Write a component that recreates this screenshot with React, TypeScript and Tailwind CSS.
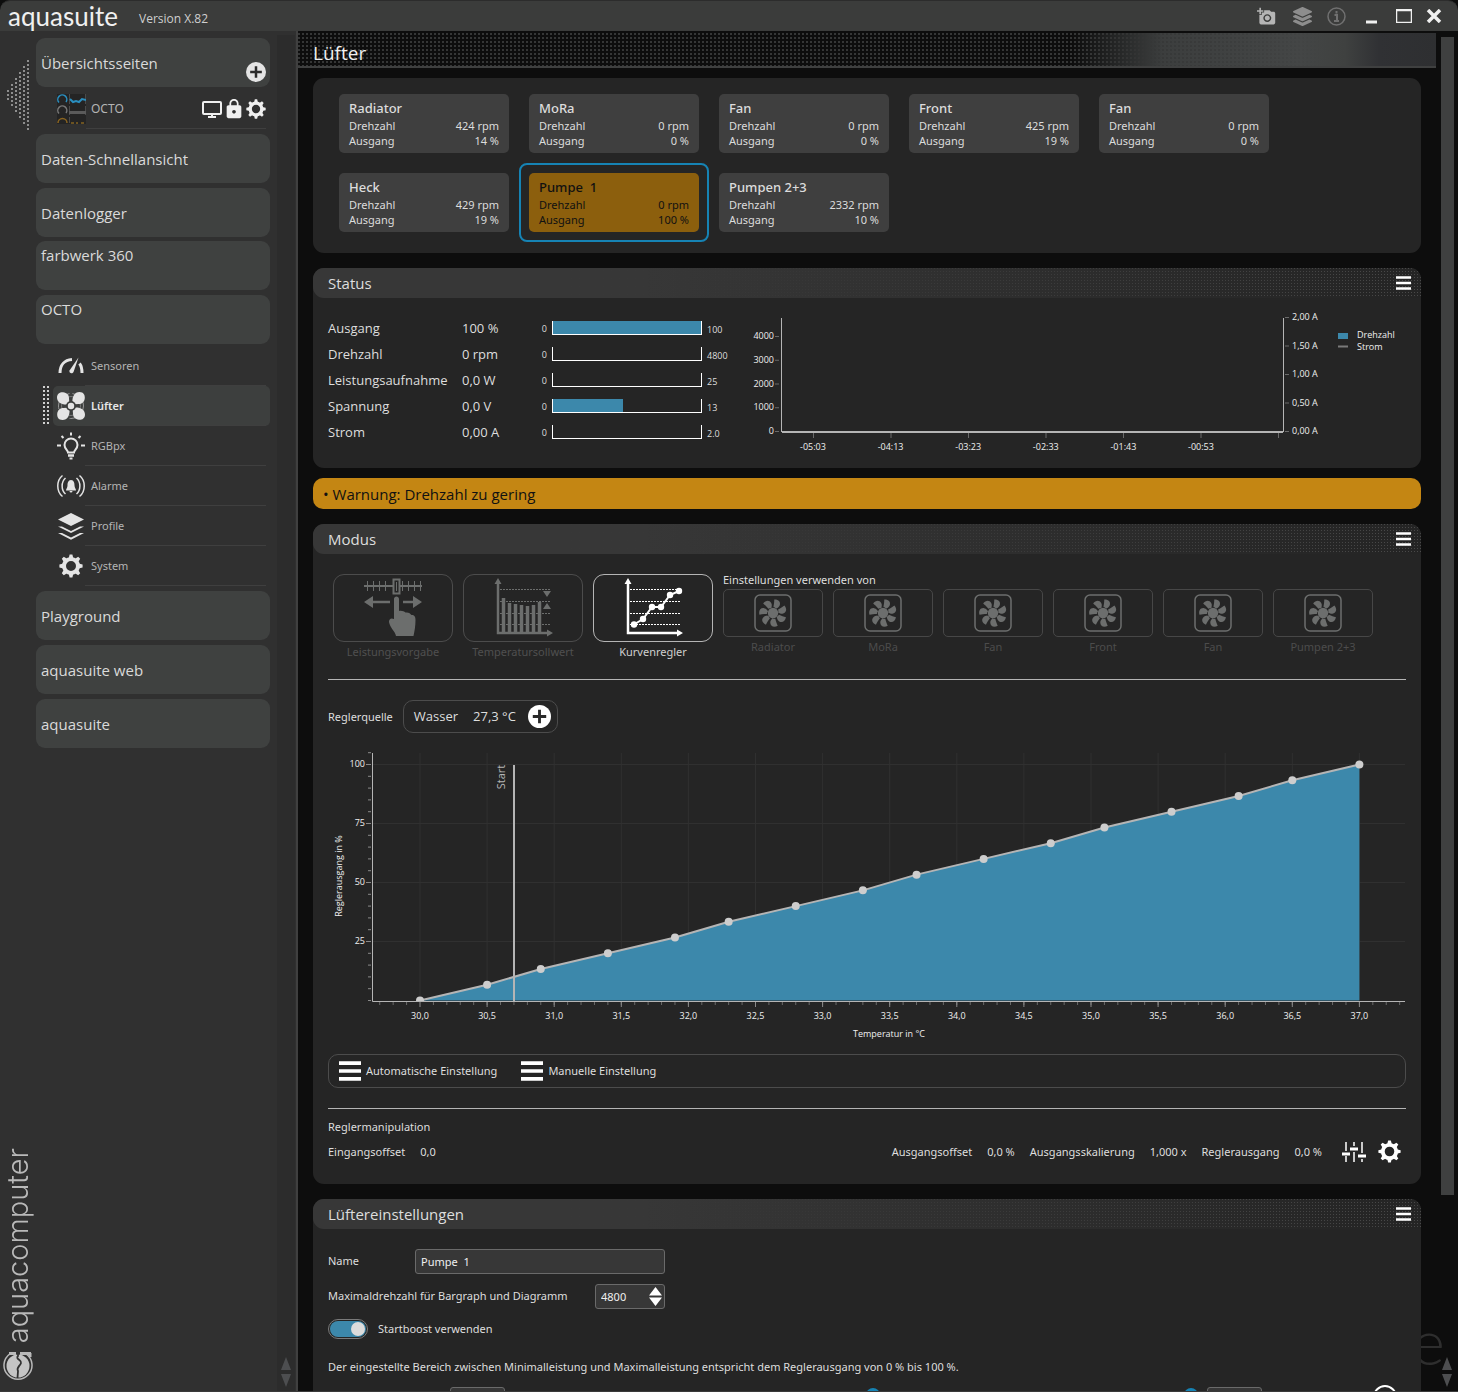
import { ReactNode, useState } from "react";
import { MdAddAPhoto, MdLock } from "react-icons/md";
import { FaLayerGroup } from "react-icons/fa";

type Fan = { name: string; rpm: string; out: string; active?: boolean };

const fans: Fan[] = [
  { name: "Radiator", rpm: "424 rpm", out: "14 %" },
  { name: "MoRa", rpm: "0 rpm", out: "0 %" },
  { name: "Fan", rpm: "0 rpm", out: "0 %" },
  { name: "Front", rpm: "425 rpm", out: "19 %" },
  { name: "Fan", rpm: "0 rpm", out: "0 %" },
  { name: "Heck", rpm: "429 rpm", out: "19 %" },
  { name: "Pumpe  1", rpm: "0 rpm", out: "100 %", active: true },
  { name: "Pumpen 2+3", rpm: "2332 rpm", out: "10 %" },
];

const statusRows = [
  { label: "Ausgang", value: "100 %", max: "100", fill: 100 },
  { label: "Drehzahl", value: "0 rpm", max: "4800", fill: 0 },
  { label: "Leistungsaufnahme", value: "0,0 W", max: "25", fill: 0 },
  { label: "Spannung", value: "0,0 V", max: "13", fill: 47 },
  { label: "Strom", value: "0,00 A", max: "2.0", fill: 0 },
];

const copyFrom = ["Radiator", "MoRa", "Fan", "Front", "Fan", "Pumpen 2+3"];

// temperature of every curve point, the output rises evenly from 0 to 100 %
const curve = [30, 30.5, 30.9, 31.4, 31.9, 32.3, 32.8, 33.3, 33.7, 34.2, 34.7, 35.1, 35.6, 36.1, 36.5, 37];

// font for all the small labels
const small = "font-['Noto_Sans',sans-serif] text-[11px]";

const range = (n: number) => Array.from({ length: n }, (_, i) => i);

/*
 * Icons
 */
function Gear({ size }: { size: number }) {
  return (
    <svg width={size} height={size} viewBox="0 0 24 24" fill="none" stroke="currentColor">
      <circle cx="12" cy="12" r="7" strokeWidth="4" />
      {range(8).map((i) => (
        <path key={i} d="M9.6 4.5 L10.6 .4 h2.8 L14.4 4.5z" fill="currentColor" stroke="none" transform={`rotate(${i * 45} 12 12)`} />
      ))}
    </svg>
  );
}

function Plus({ size }: { size: number }) {
  return (
    <svg width={size} height={size} viewBox="0 0 24 24">
      <circle cx="12" cy="12" r="12" fill="currentColor" />
      <path d="M12 5v14M5 12h14" stroke="#2a2a2a" strokeWidth="3" />
    </svg>
  );
}

function Monitor() {
  return (
    <svg width="20" height="18" viewBox="0 0 20 18" fill="none" stroke="currentColor">
      <rect x="1" y="2" width="18" height="12" rx="1" strokeWidth="2" />
      <path d="M10 14v3M6 17h8" strokeWidth="2" />
    </svg>
  );
}

function Layers({ size }: { size: number }) {
  return (
    <svg width={size} height={size} viewBox="0 0 28 28" fill="currentColor">
      <path d="M14 1 27 7.5 14 14 1 7.5z" />
      <path d="M1 14.500h4l9 4.500 9-4.500h4L14 21z" />
      <path d="M1 21h4l9 4.500L23 21h4l-13 6.800z" />
    </svg>
  );
}

function Gauge() {
  return (
    <svg width="28" height="28" viewBox="0 0 28 28" fill="none" stroke="currentColor">
      <path d="M3 21c0-8 4.500-13 12-13.500" strokeWidth="3" />
      <path d="M22.500 11.500c1.800 2.300 2.500 5.500 2.500 9.500" strokeWidth="3" />
      <path d="M21.500 5.500 16.500 20c-1 2.200-4.800 1.500-4-1.500z" fill="currentColor" stroke="none" />
    </svg>
  );
}

function FanBlob() {
  return (
    <svg width="28" height="28" viewBox="0 0 28 28" fill="currentColor">
      <circle cx="14" cy="14" r="12.500" fill="none" stroke="#9a9a9a" strokeDasharray="9 3" />
      <circle cx="14" cy="14" r="9.500" fill="none" stroke="#7a7a7a" />
      {[0, 90, 180, 270].map((a) => (
        <path key={a} d="M0 5.500C0 1.500 3 0 6 .2c4 .3 6 3 6 6l.3 4.300-2 2C5 13 0 10.500 0 5.500z" transform={`rotate(${a} 14 14)`} />
      ))}
      <circle cx="14" cy="14" r="5" fill="#3d3f3e" />
      <circle cx="14" cy="14" r="3.200" />
    </svg>
  );
}

function Bulb() {
  return (
    <svg width="28" height="28" viewBox="0 0 28 28" fill="none" stroke="currentColor" strokeWidth="2">
      <path d="M11 20.500c0-2-3.500-3.800-3.500-7.500a6.500 6.500 0 0 1 13 0c0 3.700-3.500 5.500-3.500 7.500z" />
      <path d="M11 23.500h6" strokeWidth="2.500" />
      <path d="M12.500 26.500h3M14 .5v3M4.500 4l2 2M23.500 4l-2 2M0 13.500h4M24 13.500h4" />
    </svg>
  );
}

function Alarm() {
  return (
    <svg width="28" height="28" viewBox="0 0 28 28" fill="none" stroke="currentColor" strokeWidth="1.500">
      <path d="M5.500 3.500C-.8 8.500-.8 19.500 5.500 24.500M8.500 6C4 10 4 18 8.500 22M22.500 3.500c6.300 5 6.300 16 0 21M19.500 6c4.500 4 4.500 12 0 16" />
      <path d="M14 8c-3 .2-3.500 3-3.500 5.500 0 2-1.500 3.500-1.500 5h10c0-1.500-1.500-3-1.500-5C17.500 11 17 8.200 14 8zM12.500 19h3a1.500 1.500 0 0 1-3 0z" fill="currentColor" stroke="none" />
    </svg>
  );
}

function Bars({ width, height }: { width: number; height: number }) {
  return (
    <svg width={width} height={height} viewBox="0 0 16 14" preserveAspectRatio="none" stroke="white" strokeWidth="2.500">
      <path d="M0 1.500h16M0 7h16M0 12.500h16" />
    </svg>
  );
}

function FanFrame() {
  return (
    <svg width="38" height="38" viewBox="0 0 38 38" fill="currentColor">
      <rect x="1" y="1" width="36" height="36" rx="5" fill="none" stroke="currentColor" strokeWidth="1.500" />
      <circle cx="19" cy="19" r="5.200" />
      {range(7).map((i) => (
        <path key={i} d="M17.500 13c-.3-3-.8-5-1.500-7.300 4-1.500 7.200.3 7 4-.2 2.500-1.800 3-2.500 4.300-1-.7-2-1-3-1z" transform={`rotate(${i * 51.43 + 18} 19 19)`} />
      ))}
    </svg>
  );
}

function Sliders() {
  return (
    <svg width="24" height="22" viewBox="0 0 24 22" stroke="white" fill="none">
      <path d="M4 1v9M4 15v6M12 1v4M12 11v10M20 1v11M20 18v3" strokeWidth="1.500" />
      <path d="M0 13h8M8 8h8M16 15h8" strokeWidth="3" />
    </svg>
  );
}

function HandIcon() {
  return (
    <svg width="60" height="60" viewBox="0 0 60 60" stroke="currentColor" fill="currentColor">
      <path d="M1 8h58" strokeWidth="2" />
      <path d="M4.500 3v10M10.500 3v10M16.500 3v10M22.500 3v10M39.500 3v10M45.500 3v10M51.500 3v10M57.500 3v10" fill="none" strokeWidth="1" />
      <rect x="30.500" y="1.500" width="6" height="14" fill="#252525" strokeWidth="2" />
      <path d="M33.500 4v9" strokeWidth="1" />
      <path d="M9 24h18M40 24h11" strokeWidth="2.500" />
      <path d="M1 24l9-6v12zM59 24l-9-6v12z" stroke="none" />
      <path d="M31 21c0-3.500 5-3.500 5 0v12c3-.5 5 .5 6.500 1.500 3-.5 5 1 6 2.500 3 0 4 1.500 4 5 0 6-1 11-2 16H33c-1-5-6-8-7-14 0-3 2-4.500 5-3z" stroke="none" />
    </svg>
  );
}

function Axes({ children }: { children: ReactNode }) {
  return (
    <svg width="60" height="60" viewBox="0 0 60 60" stroke="currentColor" fill="currentColor">
      <path d="M5 5v50h50" fill="none" strokeWidth="2.500" />
      <path d="M5 0l3.500 6h-7zM60 55l-6 3.500v-7z" stroke="none" />
      <path d="M7 11.500h51M7 23.500h51M7 35.500h51M7 46.500h51" strokeDasharray="2 1" strokeWidth="1" />
      {children}
    </svg>
  );
}

function BarsIcon() {
  return (
    <Axes>
      <path d="M10.500 20v34M16.500 25v29M22.500 26v28M28.500 27v27M34.500 28v26M40.500 27v27M46.500 24v30" strokeWidth="3.500" />
      <path d="M50 13h8l-4 6zM50 31h8l-4-6z" stroke="none" />
    </Axes>
  );
}

function CurveIcon() {
  const pts = [[11, 46.5], [20, 41], [29, 29], [38, 29], [47, 17], [56, 13]];
  return (
    <Axes>
      <polyline points={pts.join(" ")} fill="none" strokeWidth="2" />
      {pts.map(([x, y]) => (
        <circle key={x} cx={x} cy={y} r="3.200" stroke="none" />
      ))}
    </Axes>
  );
}

function ScrollArrows() {
  return (
    <svg width="10" height="30" viewBox="0 0 10 30" fill="#4d4e50">
      <path d="M5 0l5 13H0zM5 30l5-13H0z" />
    </svg>
  );
}

/*
 * Sidebar
 */
function NavBox({ children, top }: { children: ReactNode; top?: boolean }) {
  return (
    <button type="button" className={`flex h-[49px] w-full shrink-0 rounded-[9px] bg-[#3f4140] px-[5px] text-left text-[15px] leading-5 text-[#dadada] ${top ? "items-start pt-1" : "items-center pt-[1px]"}`}>
      {children}
    </button>
  );
}

function SubItem({ icon, label, active }: { icon: ReactNode; label: string; active?: boolean }) {
  return (
    <div className="flex">
      <div className="flex w-[17px] justify-end pr-1">
        {active && (
          <div className="w-[6px] bg-[conic-gradient(from_90deg_at_2px_2px,transparent_180deg,#d0d0d0_180deg_270deg,transparent_270deg)] bg-[length:4px_4px]" />
        )}
      </div>
      <a href="#" className={`flex h-10 flex-1 items-center rounded-[5px] pl-1 ${small} ${active ? "bg-[#3d3f3e] font-semibold text-[#e8e8e8]" : "text-[#b4b4b4]"}`}>
        <span className="text-[#e4e4e4]">{icon}</span>
        <span className="mr-1 flex h-10 flex-1 items-center border-b border-[#3f3f3f] pt-[2px] pl-[6px]">{label}</span>
      </a>
    </div>
  );
}

function Sidebar() {
  return (
    <aside className="flex w-[298px] shrink-0 border-r-2 border-[#404040] bg-[#303030]">
      <div className="flex w-9 flex-col items-center justify-between pt-7 pb-[10px]">
        <svg width="24" height="74" viewBox="0 0 24 74" fill="#8e8e8e">
          {range(6).map((c) =>
            range(c * 3 + 3).map((r) => <rect key={`${c}-${r}`} x={c * 4 + 1} y={37 - (c * 3 + 3) * 2 + r * 4} width="2" height="2" />)
          )}
        </svg>
        <div className="flex flex-col items-center gap-2">
          <span className="rotate-180 font-[Inter] text-[29px] leading-9 font-light text-[#b9b9b9] [writing-mode:vertical-rl]">aquacomputer</span>
          <svg width="30" height="30" viewBox="0 0 30 30" fill="none">
            <path d="M7 2.800a14 14 0 1 0 16 0" stroke="#b9b9b9" strokeWidth="1.500" />
            <circle cx="15" cy="15" r="11.500" fill="#c4c4c4" />
            <path d="M6 2.500h7M17 2.500h11M27 2v4" stroke="#b9b9b9" strokeWidth="3" />
            <path d="M15 1v4c-3 3 4 4 3 7s-5 5-3 8l-.500 7" stroke="#303030" strokeWidth="1.800" />
          </svg>
        </div>
      </div>
      <nav className="flex w-[234px] flex-col pt-[7px]">
        <div className="relative">
          <NavBox>Übersichtsseiten</NavBox>
          <button type="button" aria-label="Seite hinzufügen" className="absolute right-1 bottom-[5px] text-[#e4e4e4]">
            <Plus size={20} />
          </button>
        </div>
        <div className={`mt-[2px] mb-[5px] ml-[21px] flex h-10 items-center text-[#b4b4b4] ${small}`}>
          <svg width="29" height="30" viewBox="0 0 29 30" fill="none">
            <path d="M0 0h29v30H0z" fill="#242424" />
            <path d="M2 8.500A4.500 4.500 0 1 1 9 8" stroke="#2a8fc0" strokeWidth="1.500" />
            <path d="M2 19.500A4.500 4.500 0 1 1 9 19" stroke="#777" strokeWidth="1.500" />
            <path d="M1 29a4.500 4.500 0 0 1 9 0" stroke="#8a6420" strokeWidth="1.500" />
            <path d="M12.500 0v10M12.500 12v9M12.500 23v6M28.500 0v10M28.500 12v9" stroke="#4a4a4a" />
            <path d="M13 5l3 3 3-1 3 1 3-3 4 1" stroke="#2a8fc0" strokeWidth="2" />
            <path d="M12 18.500h17" stroke="#5a5a5a" strokeWidth="3" />
            <path d="M14 29h3M19 29h2M24 29h3" stroke="#b3811f" />
          </svg>
          <span className="mr-1 flex h-10 flex-1 items-center border-b border-[#3f3f3f] pl-[5px]">
            <span className="flex-1 text-xs">OCTO</span>
            <span className="flex items-center text-[#efefef]">
              <Monitor />
              <MdLock size={22} className="mx-[1px]" />
              <Gear size={20} />
            </span>
          </span>
        </div>
        <div className="flex flex-col gap-[5px]">
          <NavBox>Daten-Schnellansicht</NavBox>
          <NavBox>Datenlogger</NavBox>
        </div>
        <div className="mt-1 flex flex-col gap-[5px]">
          <NavBox top>farbwerk 360</NavBox>
          <NavBox top>OCTO</NavBox>
        </div>
        <div className="mt-[2px] mb-[5px] flex flex-col">
          <SubItem icon={<Gauge />} label="Sensoren" />
          <SubItem icon={<FanBlob />} label="Lüfter" active />
          <SubItem icon={<Bulb />} label="RGBpx" />
          <SubItem icon={<Alarm />} label="Alarme" />
          <SubItem icon={<Layers size={28} />} label="Profile" />
          <SubItem icon={<span className="block p-[2px]"><Gear size={24} /></span>} label="System" />
        </div>
        <div className="flex flex-col gap-[5px]">
          <NavBox>Playground</NavBox>
          <NavBox>aquasuite web</NavBox>
          <NavBox>aquasuite</NavBox>
        </div>
      </nav>
      <div className="mt-1 ml-[7px] flex w-[18px] flex-col items-center justify-end bg-[#2c2c2c] pb-1">
        <ScrollArrows />
      </div>
    </aside>
  );
}

/*
 * Panels
 */
function Panel({ title, children, className = "" }: { title: string; children: ReactNode; className?: string }) {
  return (
    <section className={`relative z-10 shrink-0 rounded-[11px] bg-[#252525] ${className}`}>
      <header className="relative flex h-[30px] items-center justify-between rounded-[11px] rounded-br-none bg-linear-to-r from-[#373737] from-30% to-[#242424] pr-[10px] pl-[15px]">
        <div className="absolute inset-0 rounded-tr-[11px] bg-[conic-gradient(from_90deg_at_1px_1px,transparent_180deg,#4a4a4a_180deg_270deg,transparent_270deg)] bg-[length:3px_3px] mask-l-from-0% mask-l-to-70%" />
        <h2 className="relative font-['Open_Sans'] text-[15px] text-[#dedede]">{title}</h2>
        <button type="button" aria-label={`Menü ${title}`} className="relative">
          <Bars width={15} height={14} />
        </button>
      </header>
      <div className="px-[15px]">{children}</div>
    </section>
  );
}

function FanTile({ fan }: { fan: Fan }) {
  return (
    <button type="button" className={`w-[190px] rounded-lg border-2 p-2 text-left ${fan.active ? "border-[#1683b4] text-[#111]" : "border-transparent text-[#dcdcdc]"}`}>
      <div className={`h-[59px] rounded-[5px] px-[10px] pt-[5px] ${fan.active ? "bg-[#8c5f0d]" : "bg-[#3f3f3f]"}`}>
        <div className="font-['Noto_Sans'] text-[13px] leading-[19px] font-medium whitespace-pre">{fan.name}</div>
        <div className={`flex justify-between leading-[15px] ${small}`}><span>Drehzahl</span><span>{fan.rpm}</span></div>
        <div className={`flex justify-between leading-[15px] ${small}`}><span>Ausgang</span><span>{fan.out}</span></div>
      </div>
    </button>
  );
}

function StatusChart() {
  const times = ["-05:03", "-04:13", "-03:23", "-02:33", "-01:43", "-00:53", ""];
  return (
    <svg className="block w-full" viewBox="0 0 658 150" fontSize="9" fill="#f0f0f0">
      <path d="M33.500 10v114M535.500 10v114" stroke="#b5b5b5" />
      <path d="M34 124h501" stroke="#b5b5b5" strokeWidth="2" />
      {["4000", "3000", "2000", "1000", "0"].map((t, i) => (
        <g key={t}>
          <text x="26" y={31 + i * 23.75} textAnchor="end">{t}</text>
          <path d={`M27 ${28.5 + i * 23.75}h4`} stroke="#6a6a6a" />
        </g>
      ))}
      {["2,00 A", "1,50 A", "1,00 A", "0,50 A", "0,00 A"].map((t, i) => (
        <g key={t}>
          <text x="544" y={12 + i * 28.5}>{t}</text>
          <path d={`M537 ${9.5 + i * 28.5}h4`} stroke="#6a6a6a" />
        </g>
      ))}
      {times.map((t, i) => (
        <g key={t}>
          <text x={65 + i * 77.6} y="142" textAnchor="middle">{t}</text>
          <path d={`M${65.5 + i * 77.5} 125v5`} stroke="#6a6a6a" />
        </g>
      ))}
      <path d="M590 25h10v6h-10z" fill="#3c88ab" />
      <path d="M590 38.500h10" stroke="#7a7a7a" strokeWidth="2" />
      <text x="609" y="30">Drehzahl</text>
      <text x="609" y="42">Strom</text>
    </svg>
  );
}

function CurveChart() {
  const px = (t: number) => 92 + (t - 30) * 134.2;
  const py = (v: number) => 252.5 - v * 2.36;
  const points = curve.map((t, i) => [px(t), py((i * 100) / 15)]);
  return (
    <svg className="block w-full" viewBox="0 0 1078 292" fontSize="9" fill="#f0f0f0">
      {range(15).map((i) => (
        <path key={i} d={`M${px(30 + i / 2)} 5V252`} stroke="#303030" />
      ))}
      {[25, 50, 75, 100].map((v) => (
        <g key={v}>
          <path d={`M45 ${py(v)}H1077`} stroke="#303030" />
          <path d={`M38 ${py(v)}h5`} stroke="#8a8a8a" />
          <text x="37" y={py(v) + 2.5} textAnchor="end">{v}</text>
        </g>
      ))}
      {range(22).map((i) => (
        <path key={i} d={`M40 ${py(i * 5)}h3`} stroke="#8a8a8a" />
      ))}
      {range(77).map((i) => (
        <path key={i} d={`M${px(29.7 + i / 10)} 254v3`} stroke="#6a6a6a" />
      ))}
      <polygon points={`${points.join(" ")} ${px(37)},252.5`} fill="#3c88ab" />
      <path d="M186 17v236" stroke="#b5b5b5" strokeWidth="2" />
      <polyline points={points.join(" ")} fill="none" stroke="#b5b5b5" strokeWidth="2" />
      {points.map(([x, y]) => (
        <circle key={x} cx={x} cy={y} r="4" fill="#cdcdcd" />
      ))}
      <path d="M86 254h12v3H86z" fill="#252525" />
      <path d="M44.500 5v248.500H1077" stroke="#b5b5b5" fill="none" />
      {range(15).map((i) => (
        <g key={i}>
          <path d={`M${px(30 + i / 2)} 254v5`} stroke="#8a8a8a" />
          <text x={px(30 + i / 2)} y="271" textAnchor="middle">{(30 + i / 2).toFixed(1).replace(".", ",")}</text>
        </g>
      ))}
      <text x="561" y="289" textAnchor="middle">Temperatur in °C</text>
      <text transform="translate(14 128) rotate(-90)" textAnchor="middle">Reglerausgang in %</text>
      <text transform="translate(177 29) rotate(-90)" textAnchor="middle" fontSize="11" fill="#b5b5b5">Start</text>
    </svg>
  );
}

function ModeButton({ icon, label, active }: { icon: ReactNode; label: string; active?: boolean }) {
  return (
    <button type="button" className={`w-[120px] ${small} ${active ? "text-white" : "text-[#6c6e6d]"}`}>
      <span className={`flex h-[68px] items-center justify-center rounded-[11px] border ${active ? "border-[#b5b5b5]" : "border-[#4c4c4c]"}`}>{icon}</span>
      <span className={`block leading-5 ${active ? "text-[#d0d0d0]" : "text-[#505050]"}`}>{label}</span>
    </button>
  );
}

function ModePanel() {
  return (
    <Panel title="Modus" className={`mt-[15px] text-[#dedede] ${small}`}>
      <div className="flex gap-[10px] px-[5px] pt-5">
        <ModeButton icon={<HandIcon />} label="Leistungsvorgabe" />
        <ModeButton icon={<BarsIcon />} label="Temperatursollwert" />
        <ModeButton icon={<CurveIcon />} label="Kurvenregler" active />
        <div className="-mt-[2px]">
          <div className="leading-[15px] pb-[2px]">Einstellungen verwenden von</div>
          <div className="flex gap-[10px]">
            {copyFrom.map((name, i) => (
              <button key={i} type="button" className="w-[100px] text-[#6c6e6d]">
                <span className="flex h-12 items-center justify-center rounded-[5px] border border-[#474747]"><FanFrame /></span>
                <span className="block leading-5 text-[#4c4c4c]">{name}</span>
              </button>
            ))}
          </div>
        </div>
      </div>
      <hr className="mt-[17px] border-[#b5b5b5]" />
      <div className="mt-5 flex items-center gap-[10px]">
        <span className="pt-[2px]">Reglerquelle</span>
        <div className="flex h-[33px] items-center rounded-[10px] border border-[#4c4c4c] pr-[6px] pl-[10px] font-['Open_Sans'] text-[13px]">
          <span className="mr-[15px]">Wasser</span>
          <span className="mr-3">27,3 °C</span>
          <button type="button" aria-label="Quelle wählen" className="text-white"><Plus size={23} /></button>
        </div>
      </div>
      <div className="mt-[15px] font-['Open_Sans']"><CurveChart /></div>
      <div className="mt-[14px] flex h-[34px] items-center gap-6 rounded-[10px] border border-[#4c4c4c] px-[10px]">
        <button type="button" className="flex items-center gap-[5px]"><Bars width={22} height={20} />Automatische Einstellung</button>
        <button type="button" className="flex items-center gap-[5px]"><Bars width={22} height={20} />Manuelle Einstellung</button>
      </div>
      <hr className="mt-5 border-[#b5b5b5]" />
      <div className="pt-2 leading-5">Reglermanipulation</div>
      <div className="flex items-center gap-[15px] pt-[3px] pr-[5px] pb-[21px] leading-5">
        <span>Eingangsoffset</span>
        <span className="flex-1">0,0</span>
        <span>Ausgangsoffset</span>
        <span>0,0 %</span>
        <span>Ausgangsskalierung</span>
        <span>1,000 x</span>
        <span>Reglerausgang</span>
        <span>0,0 %</span>
        <span className="ml-[5px] flex items-center gap-3 text-white">
          <button type="button" aria-label="Regler"><Sliders /></button>
          <button type="button" aria-label="Einstellungen"><Gear size={23} /></button>
        </span>
      </div>
    </Panel>
  );
}

function SettingsPanel() {
  const [boost, setBoost] = useState(true);
  const field = "rounded-[3px] border border-[#6a6a6a] bg-[#373737] px-[5px] text-[#f0f0f0] outline-none";
  const slider =
    "h-4 min-w-0 appearance-none bg-transparent [&::-webkit-slider-thumb]:size-[14px] [&::-webkit-slider-thumb]:appearance-none [&::-webkit-slider-thumb]:rounded-full [&::-webkit-slider-thumb]:bg-[#1683b4]";
  return (
    <Panel title="Lüftereinstellungen" className={`mt-[15px] text-[#dedede] ${small}`}>
      <div className="flex items-center pt-5">
        <label htmlFor="name" className="w-[87px]">Name</label>
        <input id="name" defaultValue="Pumpe  1" className={`h-[25px] w-[250px] ${field}`} />
      </div>
      <div className="mt-[10px] flex items-center">
        <label htmlFor="max" className="w-[267px]">Maximaldrehzahl für Bargraph und Diagramm</label>
        <div className="relative">
          <input id="max" defaultValue="4800" className={`h-[25px] w-[70px] ${field}`} />
          <svg className="absolute top-[3px] right-[3px]" width="13" height="19" viewBox="0 0 13 19" fill="white">
            <path d="M6.500 0 13 8.500H0zM6.500 19 13 10.500H0z" />
          </svg>
        </div>
      </div>
      <label className="mt-[10px] flex w-fit items-center gap-[10px] leading-5">
        <input type="checkbox" role="switch" checked={boost} onChange={(e) => setBoost(e.target.checked)} className="peer sr-only" />
        <span className="flex h-5 w-10 items-center rounded-full border border-[#7a7a7a] p-[1px]">
          <span className={`flex h-4 w-full items-center rounded-full px-[1px] ${boost ? "justify-end bg-[#3c88ab]" : "bg-[#3f3f3f]"}`}>
            <span className="size-[14px] rounded-full bg-[#dcdcdc]" />
          </span>
        </span>
        Startboost verwenden
      </label>
      <p className="mt-[18px] leading-5">
        Der eingestellte Bereich zwischen Minimalleistung und Maximalleistung entspricht dem Reglerausgang von 0 % bis 100 %.
      </p>
      <div className="mt-[10px] flex items-start pl-[122px]">
        <input aria-label="Minimalleistung" className={`h-[25px] w-[55px] ${field}`} />
        <input type="range" aria-label="Minimum" defaultValue={100} className={`flex-[376] ${slider}`} />
        <input type="range" aria-label="Maximum" defaultValue={100} className={`flex-[318] ${slider}`} />
        <input aria-label="Maximalleistung" className={`ml-[9px] h-[25px] w-[55px] ${field}`} />
        <button type="button" aria-label="Zurücksetzen" className="-mt-[2px] mr-[9px] ml-[111px] size-6 rounded-full border-2 border-white" />
      </div>
    </Panel>
  );
}

export default function App() {
  return (
    <div className="flex h-screen flex-col overflow-hidden border-b border-[#3a3a3a] bg-[#0d0d0d] font-['Open_Sans','Noto_Sans',sans-serif]">
      <header className="flex h-[31px] shrink-0 items-center rounded-t-[10px] border-t border-[#2c2c2c] bg-[#3b3c3b] pr-4 pl-2">
        <h1 className="w-[131px] font-[Lato] text-[26px] leading-7 text-[#f0f0f0]">aquasuite</h1>
        <span className="mt-[5px] flex-1 text-xs text-[#cfcfcf]">Version X.82</span>
        <div className="flex items-center text-[#b5b5b5]">
          <button type="button" aria-label="Screenshot" className="mr-[17px]"><MdAddAPhoto size={19} /></button>
          <button type="button" aria-label="Profile" className="mr-[15px] text-[#8d8d8d]"><FaLayerGroup size={19} /></button>
          <button type="button" aria-label="Info" className="mr-5 text-[#707070]">
            <svg width="19" height="19" viewBox="0 0 19 19" fill="none" stroke="currentColor">
              <circle cx="9.500" cy="9.500" r="8.500" strokeWidth="1.500" />
              <path d="M7.500 8h2.500v6M7 14h5M9.500 4v2.500" strokeWidth="2" />
            </svg>
          </button>
          <button type="button" aria-label="Minimieren" className="mr-[19px]">
            <svg width="11" height="16" viewBox="0 0 11 16"><path d="M0 14h11" stroke="#f0f0f0" strokeWidth="3" /></svg>
          </button>
          <button type="button" aria-label="Maximieren" className="mr-[14px]">
            <svg width="16" height="14" viewBox="0 0 16 14"><path d="M.5 .5h15v13H.5zM0 1.500h16" fill="none" stroke="#f0f0f0" strokeWidth="1.500" /></svg>
          </button>
          <button type="button" aria-label="Schließen">
            <svg width="16" height="14" viewBox="0 0 16 14"><path d="M2 1l12 12M14 1 2 13" stroke="#f0f0f0" strokeWidth="3.500" /></svg>
          </button>
        </div>
      </header>
      <div className="relative flex min-h-0 flex-1">
        <span aria-hidden="true" className="absolute right-[13px] bottom-[18px] font-[Lato] text-[64px] leading-[64px] font-light text-[#2e2e2e]">e</span>
        <Sidebar />
        <main className="flex min-w-0 flex-1 flex-col overflow-hidden">
          <div className="relative mt-[2px] flex h-[35px] shrink-0 items-center border-b-2 border-[#3f4040] bg-[linear-gradient(90deg,#0d0d0d_68%,#1f2020_71%,#3c3e3e_76%,#444646_88%,#3f4140_92%,#303134_95%,#2e2f31)] px-[15px]">
            <div className="absolute inset-0 bg-[conic-gradient(from_90deg_at_2px_2px,transparent_180deg,#353636_180deg_270deg,transparent_270deg)] bg-[length:4px_4px] mask-r-from-70% mask-r-to-90%" />
            <h2 className="relative pt-[6px] text-[19px] leading-6 font-medium text-[#f0f0f0]">Lüfter</h2>
          </div>
          <div className="flex min-h-0 flex-1 flex-col overflow-hidden px-[15px] pt-[10px]">
            <section className="flex shrink-0 flex-wrap rounded-[11px] bg-[#252525] px-4 pt-[6px] pb-[11px]">
              {fans.map((fan, i) => (
                <FanTile key={i} fan={fan} />
              ))}
            </section>
            <Panel title="Status" className="mt-[15px]">
              <div className="flex pt-[10px] pb-[10px]">
                <table className="mt-[7px] h-[130px] w-[420px] shrink-0 table-fixed text-left text-[13px] text-[#dedede]">
                  <tbody>
                    {statusRows.map((row) => (
                      <tr key={row.label} className="h-[26px]">
                        <th className="w-[134px] pt-[2px] font-normal">{row.label}</th>
                        <td className="w-[72px] pt-[2px]">{row.value}</td>
                        <td className="w-[18px] pt-[2px] pr-[5px] text-right text-[9px]">0</td>
                        <td className="w-[150px]">
                          <div className="h-[14px] border border-t-0 border-white">
                            <div className="h-full bg-[#3c88ab]" style={{ width: `${row.fill}%` }} />
                          </div>
                        </td>
                        <td className="pt-[3px] pl-[5px] text-[9px]">{row.max}</td>
                      </tr>
                    ))}
                  </tbody>
                </table>
                <div className="min-w-0 flex-1"><StatusChart /></div>
              </div>
            </Panel>
            <div role="alert" className="mt-[10px] flex h-[31px] shrink-0 items-center rounded-[10px] bg-[#c48613] px-[10px] pt-[2px] text-[15px] text-[#111]">
              • Warnung: Drehzahl zu gering
            </div>
            <ModePanel />
            <SettingsPanel />
          </div>
        </main>
        <div className="relative flex w-[22px] flex-col items-center justify-between pt-[6px] pb-1">
          <div className="h-[1158px] w-[13px] bg-[#3f4040]" />
          <ScrollArrows />
        </div>
      </div>
    </div>
  );
}
